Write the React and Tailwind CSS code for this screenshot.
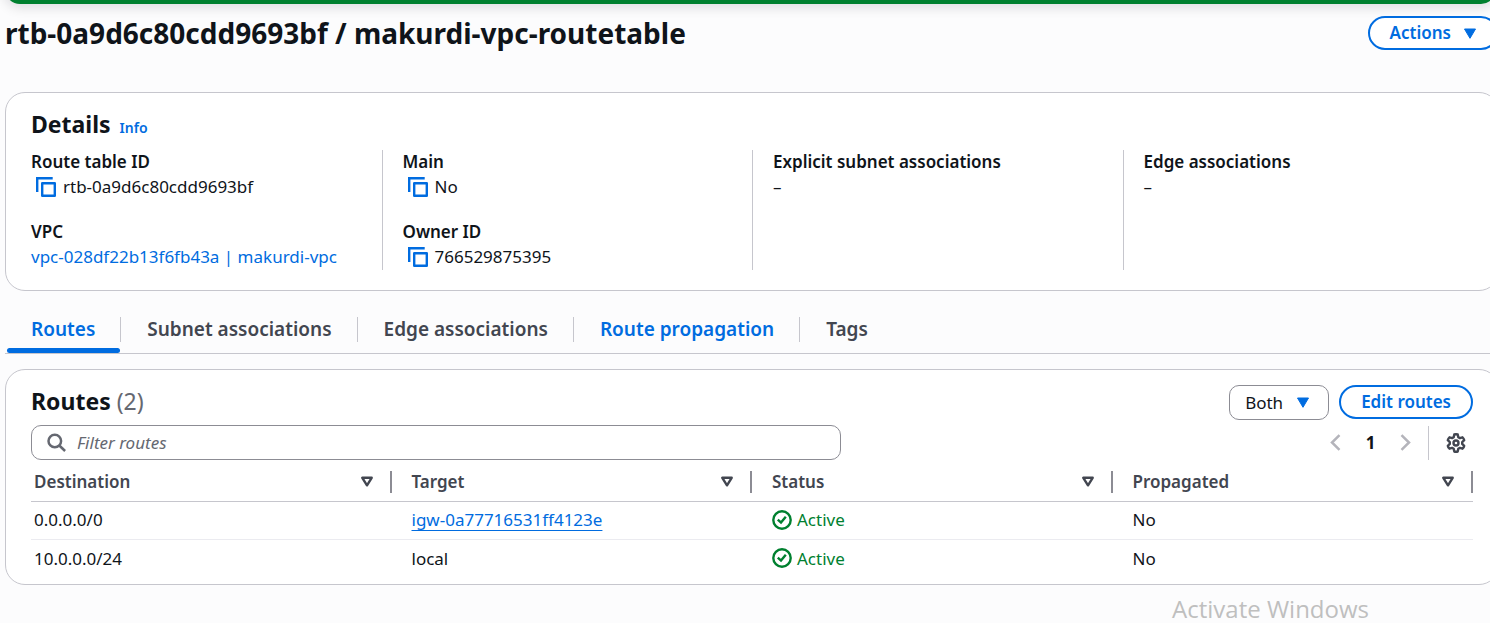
import React from "react";

const CopyIcon = () => (
  <svg viewBox="0 0 20 20" className="size-5" fill="none" stroke="currentColor" strokeWidth="2.4">
    <path d="M1.200 15V1.200h15.500" />
    <rect x="6.200" y="6.200" width="12.600" height="12.600" strokeLinejoin="round" />
  </svg>
);

const Caret = ({ className = "" }) => (
  <svg viewBox="0 0 12 11" className={"h-[11px] w-3 " + className} fill="currentColor" stroke="currentColor" strokeLinejoin="round" aria-hidden="true">
    <path d="M0.500 1h11L6 10.300z" />
  </svg>
);

const SortIcon = () => (
  <svg viewBox="0 0 12 11" className="h-[11px] w-3" fill="none" stroke="currentColor" strokeWidth="2.4" strokeLinejoin="round" aria-hidden="true">
    <path d="M1.300 1.800h9.400L6 9.300z" />
  </svg>
);

const CheckIcon = () => (
  <svg viewBox="0 0 20 20" className="size-5" fill="none" stroke="currentColor" strokeWidth="2.4" aria-hidden="true">
    <circle cx="10" cy="10" r="8.7" />
    <path d="M5.800 9.600 9 12.600 13.800 6.800" />
  </svg>
);

const GearIcon = () => (
  <svg viewBox="0 0 20 20" className="size-5" fill="none" stroke="currentColor" strokeWidth="2.4" strokeLinejoin="round" aria-hidden="true">
    <path d="M8.300 1.500Q10 .900 11.700 1.500L12.300 4.200L13.900 5.100L16.500 4.300Q17.900 5.500 18.200 7.200L16.200 9.100V10.900L18.200 12.800Q17.900 14.500 16.500 15.700L13.900 14.900L12.300 15.800L11.700 18.500Q10 19.100 8.300 18.500L7.700 15.800L6.100 14.900L3.500 15.700Q2.100 14.500 1.800 12.800L3.800 10.900V9.100L1.800 7.200Q2.100 5.500 3.500 4.300L6.100 5.100L7.700 4.200Z" />
    <circle cx="10" cy="10" r="2.500" />
  </svg>
);

const Field = ({ label, children }) => (
  <div className="h-[50px]">
    <dt className="text-[17px] leading-[24px] font-semibold">{label}</dt>
    <dd className="flex items-center text-[17px] leading-[25px]">{children}</dd>
  </div>
);

const Copyable = ({ value }) => (
  <>
    <button type="button" aria-label={"Copy " + value} className="mr-[7px] ml-[5px] text-[#006ce0]">
      <CopyIcon />
    </button>
    {value}
  </>
);

const tabs = [
  { name: "Routes", active: true },
  { name: "Subnet associations" },
  { name: "Edge associations" },
  { name: "Route propagation", hover: true },
  { name: "Tags" },
];

const routes = [
  { destination: "0.0.0.0/0", target: "igw-0a77716531ff4123e", link: true },
  { destination: "10.0.0.0/24", target: "local" },
];

const columns = ["Destination", "Target", "Status", "Propagated"];

export default function App() {
  return (
    <div className="relative min-h-screen overflow-hidden bg-[#fcfcfd] font-['Noto_Sans',sans-serif] text-[#0f141a]">
      <main className="-mr-[9px] ml-[5px]">
        <div className="-mt-5 mr-[3px] h-6 rounded-b-[15px] bg-[#00802f] shadow-[0_2px_12px_2px_#0007161f]" />
        <header className="flex items-center justify-between pt-3 pr-px">
          <h1 className="text-[28px] leading-[34px] font-bold">rtb-0a9d6c80cdd9693bf / makurdi-vpc-routetable</h1>
          <button type="button" className="flex h-[34px] items-center rounded-full border-2 border-[#006ce0] bg-white px-5 text-[17px] font-semibold text-[#006ce0]">
            Actions <Caret className="ml-[13px]" />
          </button>
        </header>

        <section className="mt-[42px] rounded-[20px] border border-[#c6c6cd] bg-white px-[5px] pt-4 pb-5">
          <h2 className="flex items-baseline gap-[9px] px-5 text-[23px] leading-[30px] font-bold">
            Details
            <a href="#info" className="text-[14px] font-semibold text-[#006ce0]">Info</a>
          </h2>
          <dl className="mt-[7px] grid grid-cols-4">
            <div className="flex flex-col gap-5 px-5">
              <Field label="Route table ID"><Copyable value="rtb-0a9d6c80cdd9693bf" /></Field>
              <Field label="VPC"><a href="#vpc" className="text-[#006ce0]">vpc-028df22b13f6fb43a | makurdi-vpc</a></Field>
            </div>
            <div className="flex flex-col gap-5 border-l border-[#c6c6cd] px-5">
              <Field label="Main"><Copyable value="No" /></Field>
              <Field label="Owner ID"><Copyable value="766529875395" /></Field>
            </div>
            <div className="border-l border-[#c6c6cd] px-5">
              <Field label="Explicit subnet associations">–</Field>
            </div>
            <div className="border-l border-[#c6c6cd] px-5">
              <Field label="Edge associations">–</Field>
            </div>
          </dl>
        </section>

        <div role="tablist" className="mt-[14px] flex border-b border-[#c6c6cd]">
          {tabs.map((t, i) => (
            <div key={t.name} className="relative flex h-12 items-center">
              <button
                type="button"
                role="tab"
                aria-selected={!!t.active}
                className={"h-[25px] pr-[25px] pl-[26px] text-[19px] leading-[25px] font-semibold " + (i < 4 ? "border-r border-[#c6c6cd] " : "") + (t.active || t.hover ? "text-[#006ce0]" : "text-[#424650]")}
              >
                {t.name}
              </button>
              {t.active && <span className="absolute right-px bottom-0 left-[2px] h-[5px] rounded-full bg-[#006ce0]" />}
            </div>
          ))}
        </div>

        <section className="mt-[15px] rounded-[20px] border border-[#c6c6cd] bg-white px-[25px] pt-[15px] pb-[7px]">
          <div className="flex items-start justify-between">
            <h2 className="text-[23px] leading-[32px] font-bold">
              Routes <span className="font-normal text-[#656871]">(2)</span>
            </h2>
            <div className="flex items-start gap-[10px]">
              <div className="relative">
                <select aria-label="Route type" className="h-[35px] w-[100px] appearance-none rounded-[10px] border border-[#8c8c94] bg-white pl-[15px] text-[17px]">
                  <option>Both</option>
                </select>
                <Caret className="pointer-events-none absolute top-3 right-5 text-[#006ce0]" />
              </div>
              <button type="button" className="h-[34px] rounded-full border-2 border-[#006ce0] bg-white px-5 text-[17px] leading-[30px] font-semibold text-[#006ce0]">Edit routes</button>
            </div>
          </div>

          <div className="mt-[5px] flex items-center justify-between">
            <label className="flex h-[35px] w-[810px] items-center rounded-[10px] border border-[#8c8c94] bg-white pl-[15px]">
              <svg viewBox="0 0 20 20" className="size-5 text-[#656871]" fill="none" stroke="currentColor" strokeWidth="2.5" aria-hidden="true">
                <circle cx="7.800" cy="8" r="6.300" />
                <path d="m12.300 12.500 5.800 5.500" />
              </svg>
              <input type="text" aria-label="Filter routes" placeholder="Filter routes" className="ml-[10px] min-w-0 flex-1 bg-transparent text-[17px] outline-none placeholder:text-[#656871] placeholder:italic" />
            </label>
            <div className="flex h-[34px] items-center">
              <button type="button" aria-label="Previous page" className="text-[#b4b4bb]">
                <svg viewBox="0 0 11 17" className="h-[17px] w-[11px]" fill="none" stroke="currentColor" strokeWidth="2.500"><path d="M9.500 1.200 2 8.500l7.500 7.300" /></svg>
              </button>
              <button type="button" aria-label="Page 1" className="w-[59px] text-[17px] font-bold">1</button>
              <button type="button" aria-label="Next page" className="text-[#b4b4bb]">
                <svg viewBox="0 0 11 17" className="h-[17px] w-[11px]" fill="none" stroke="currentColor" strokeWidth="2.500"><path d="M1.500 1.200 9 8.500l-7.500 7.300" /></svg>
              </button>
              <span className="mx-[17px] h-[34px] w-px bg-[#c6c6cd]" />
              <button type="button" aria-label="Preferences" className="mr-[7px] text-[#424650]"><GearIcon /></button>
            </div>
          </div>

          <table className="mt-[3px] w-full table-fixed border-collapse text-left text-[17px]">
            <thead>
              <tr className="border-b border-[#c6c6cd]">
                {columns.map((c, i) => (
                  <th key={c} scope="col" className={"h-[38px] p-0 font-semibold text-[#424650] " + (i ? "pl-5" : "pl-[3px]")}>
                    <div className="flex h-[22px] items-center justify-between border-r-2 border-[#8c8c94] pr-[17px]">
                      {c}
                      <button type="button" aria-label={"Sort by " + c}><SortIcon /></button>
                    </div>
                  </th>
                ))}
              </tr>
            </thead>
            <tbody>
              {routes.map((r) => (
                <tr key={r.destination} className="border-b border-[#ebebf0] last:border-0">
                  <td className="h-[38px] p-0 pl-[3px]">{r.destination}</td>
                  <td className="p-0 pl-5">
                    {r.link ? <a href="#igw" className="text-[#006ce0] underline decoration-1 underline-offset-4">{r.target}</a> : r.target}
                  </td>
                  <td className="p-0 pl-5">
                    <span className="flex items-center gap-[5px] text-[#00802f]"><CheckIcon />Active</span>
                  </td>
                  <td className="p-0 pl-5">No</td>
                </tr>
              ))}
            </tbody>
          </table>
        </section>
      </main>
      <p className="absolute right-[121px] bottom-0 font-['Open_Sans',sans-serif] text-[24px] leading-[28px] text-[#bfbfbf]">Activate Windows</p>
    </div>
  );
}
